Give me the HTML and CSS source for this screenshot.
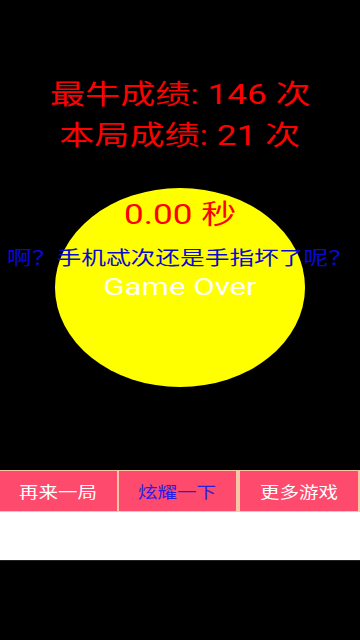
FILE: index.html
```html
<!DOCTYPE html>
<html lang="zh-CN">
<head>
<meta charset="utf-8">
<meta name="viewport" content="width=360, initial-scale=1">
<title>Game Over</title>
<link rel="stylesheet" href="styles.css">
</head>
<body>
<div class="screen">
  <div class="scores">
    <div class="score-line"><span class="wide">最牛成绩: 146 次</span></div>
    <div class="score-line"><span class="wide">本局成绩: 21 次</span></div>
  </div>
  <div class="disc">
    <div class="timer"><span class="wide">0.00 秒</span></div>
    <div class="taunt"><span class="wide">啊？手机忒次还是手指坏了呢？</span></div>
    <div class="over"><span class="wide">Game Over</span></div>
  </div>
  <div class="actions">
    <div class="btn"><span class="wide narrow">再来一局</span></div>
    <div class="btn btn-blue"><span class="wide narrow">炫耀一下</span></div>
    <div class="btn btn-last"><span class="wide narrow">更多游戏</span></div>
  </div>
  <div class="ad-strip"></div>
</div>
</body>
</html>
```
FILE: styles.css
```css
html, body {
  margin: 0;
  padding: 0;
  background: #000;
}
body {
  font-family: Roboto, "Noto Sans CJK SC", sans-serif;
  width: 360px;
  height: 640px;
  overflow: hidden;
}
.screen {
  display: flex;
  flex-direction: column;
  width: 360px;
}
.wide {
  display: inline-block;
  transform: scaleX(1.3);
  transform-origin: center;
  white-space: nowrap;
}
.wide.narrow {
  transform: scaleX(1.22);
}
.scores {
  padding-top: 75px;
  display: flex;
  flex-direction: column;
  align-items: center;
}
.score-line {
  color: #ff0000;
  font-size: 27px;
  line-height: 41px;
  height: 41px;
}
.disc {
  margin: 31px 0 0 55px;
  width: 250px;
  height: 199px;
  border-radius: 50%;
  background: #ffff00;
  display: flex;
  flex-direction: column;
  align-items: center;
}
.timer {
  margin-top: 10px;
  color: #ff0000;
  font-size: 27px;
  line-height: 34px;
  height: 34px;
}
.taunt {
  margin-top: 15px;
  color: #0a0ad0;
  font-size: 19px;
  line-height: 24px;
  height: 24px;
}
.over {
  margin-top: 2px;
  color: #ffffff;
  font-size: 24px;
  line-height: 28px;
  height: 28px;
}
.actions {
  margin-top: 83px;
  height: 42px;
  box-sizing: border-box;
  padding: 1px 2px 1px 0;
  background: #f7c6a6;
  display: flex;
  gap: 2px;
}
.btn {
  flex: 0 0 117px;
  background: #fd4a6d;
  color: #ffffff;
  font-size: 16px;
  display: flex;
  align-items: center;
  justify-content: center;
}
.btn-blue {
  color: #2a1ee0;
  margin-right: 2px;
}
.btn-last {
  flex: 1 1 auto;
}
.ad-strip {
  height: 48px;
  background: #ffffff;
  border-bottom: 1px solid #222;
}
```
